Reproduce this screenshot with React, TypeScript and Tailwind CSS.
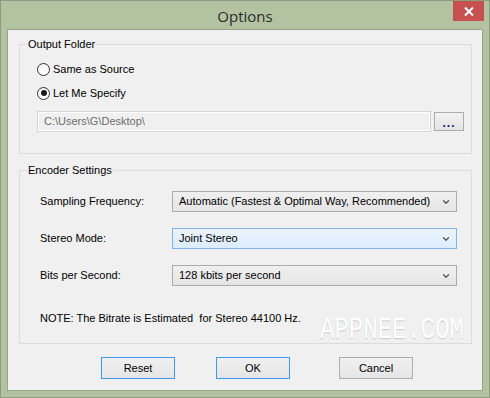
import { ChevronDown } from 'lucide-react';

const ui = { fontFamily: '"Liberation Sans", Arial, sans-serif' };

function Radio({ checked, label }: { checked?: boolean; label: string }) {
  return (
    <div className="flex items-center h-[14px]">
      <span className="w-[13px] h-[13px] rounded-full border border-[#333] bg-gradient-to-b from-[#f4f4f4] to-[#ffffff] flex items-center justify-center">
        {checked && <span className="w-[6px] h-[6px] rounded-full bg-[#1a1a1a]" />}
      </span>
      <span className="ml-[3px] text-[11px] text-black">{label}</span>
    </div>
  );
}

function Combo({ value, focused }: { value: string; focused?: boolean }) {
  return (
    <div
      className={
        focused
          ? 'w-[285px] h-[21px] border border-[#7eb4ea] bg-gradient-to-b from-[#ecf4fc] to-[#dcecfc] flex items-center pl-[6px] pr-[5px]'
          : 'w-[285px] h-[21px] border border-[#acacac] bg-gradient-to-b from-[#f0f0f0] to-[#e5e5e5] flex items-center pl-[6px] pr-[5px]'
      }
    >
      <span className="flex-1 text-[11px] text-black leading-none whitespace-nowrap">{value}</span>
      <ChevronDown size={10} strokeWidth={3} className="text-[#555]" />
    </div>
  );
}

function Group({ title, className, children }: { title: string; className: string; children: React.ReactNode }) {
  return (
    <div className={`relative ml-[11px] w-[453px] border border-[#dcdcdc] ${className}`}>
      <span className="absolute -top-[8px] left-[7px] bg-[#f0f0f0] px-[1px] text-[11px] leading-[14px] text-black">
        {title}
      </span>
      {children}
    </div>
  );
}

function Button({ label, blue, className }: { label: string; blue?: boolean; className: string }) {
  return (
    <div
      className={`w-[74px] h-[22px] border ${blue ? 'border-[#3c9af0]' : 'border-[#acacac]'} bg-gradient-to-b from-[#f0f0f0] to-[#e5e5e5] flex items-center justify-center text-[11px] text-black ${className}`}
    >
      {label}
    </div>
  );
}

export default function App() {
  return (
    <div className="w-[490px] h-[398px] bg-[#b3c3a1] border border-[#8d9c80] flex flex-col" style={ui}>
      {/* title bar */}
      <div className="relative h-[28px] flex items-center justify-center">
        <span className="text-[15px] text-[#2b2b2b] pt-[2px]" style={{ fontFamily: '"Open Sans", "Noto Sans", sans-serif' }}>
          Options
        </span>
        <div className="absolute top-0 right-[5px] w-[31px] h-[20px] bg-[#c75050] flex items-center justify-center">
          <svg width="10" height="9" viewBox="0 0 10 9">
            <path d="M1 0.5 L9 8.5 M9 0.5 L1 8.5" stroke="#fff" strokeWidth="2" />
          </svg>
        </div>
      </div>

      {/* client area */}
      <div className="mx-[6px] mb-[6px] flex-1 border border-[#97a689] bg-[#f0f0f0] flex flex-col">
        <Group title="Output Folder" className="mt-[14px] h-[110px]">
          <div className="pl-[17px] pt-[17px] flex flex-col gap-[10px]">
            <Radio label="Same as Source" />
            <Radio checked label="Let Me Specify" />
          </div>
          <div className="flex items-center pl-[17px] mt-[11px]">
            <div className="w-[394px] h-[21px] border border-[#d5d5d5] flex">
              <div className="flex-1 border border-white flex items-center pl-[5px] text-[11px] text-[#6d6d6d]">
                C:\Users\G\Desktop\
              </div>
            </div>
            <div className="ml-[3px] w-[30px] h-[19px] border border-[#adadad] bg-gradient-to-b from-[#f2f2f2] to-[#e3e3e3] flex items-end justify-center pb-[3px]">
              <span className="text-[12px] leading-[8px] font-bold text-[#2a1a6a] tracking-[1px]">...</span>
            </div>
          </div>
        </Group>

        <Group title="Encoder Settings" className="mt-[16px] h-[174px]">
          <div className="pl-[20px] pt-[20px] flex flex-col gap-[16px]">
            <div className="flex items-center">
              <span className="w-[132px] text-[11px] text-black">Sampling Frequency:</span>
              <Combo value="Automatic (Fastest & Optimal Way, Recommended)" />
            </div>
            <div className="flex items-center">
              <span className="w-[132px] text-[11px] text-black">Stereo Mode:</span>
              <Combo focused value="Joint Stereo" />
            </div>
            <div className="flex items-center">
              <span className="w-[132px] text-[11px] text-black">Bits per Second:</span>
              <Combo value="128 kbits per second" />
            </div>
            <div className="mt-[8px] text-[11px] text-black whitespace-pre">
              NOTE: The Bitrate is Estimated  for Stereo 44100 Hz.
            </div>
          </div>
          {/* watermark */}
          <span
            className="absolute left-[300px] top-[147px] text-[24px] leading-[24px] text-white scale-y-[1.25] [text-shadow:0_1px_1px_#c8c8c8]"
            style={{ fontFamily: '"Liberation Mono", monospace' }}
          >
            APPNEE.COM
          </span>
        </Group>

        <div className="flex mt-[13px]">
          <Button blue label="Reset" className="ml-[93px]" />
          <Button blue label="OK" className="ml-[41px]" />
          <Button label="Cancel" className="ml-[49px]" />
        </div>
      </div>
    </div>
  );
}
